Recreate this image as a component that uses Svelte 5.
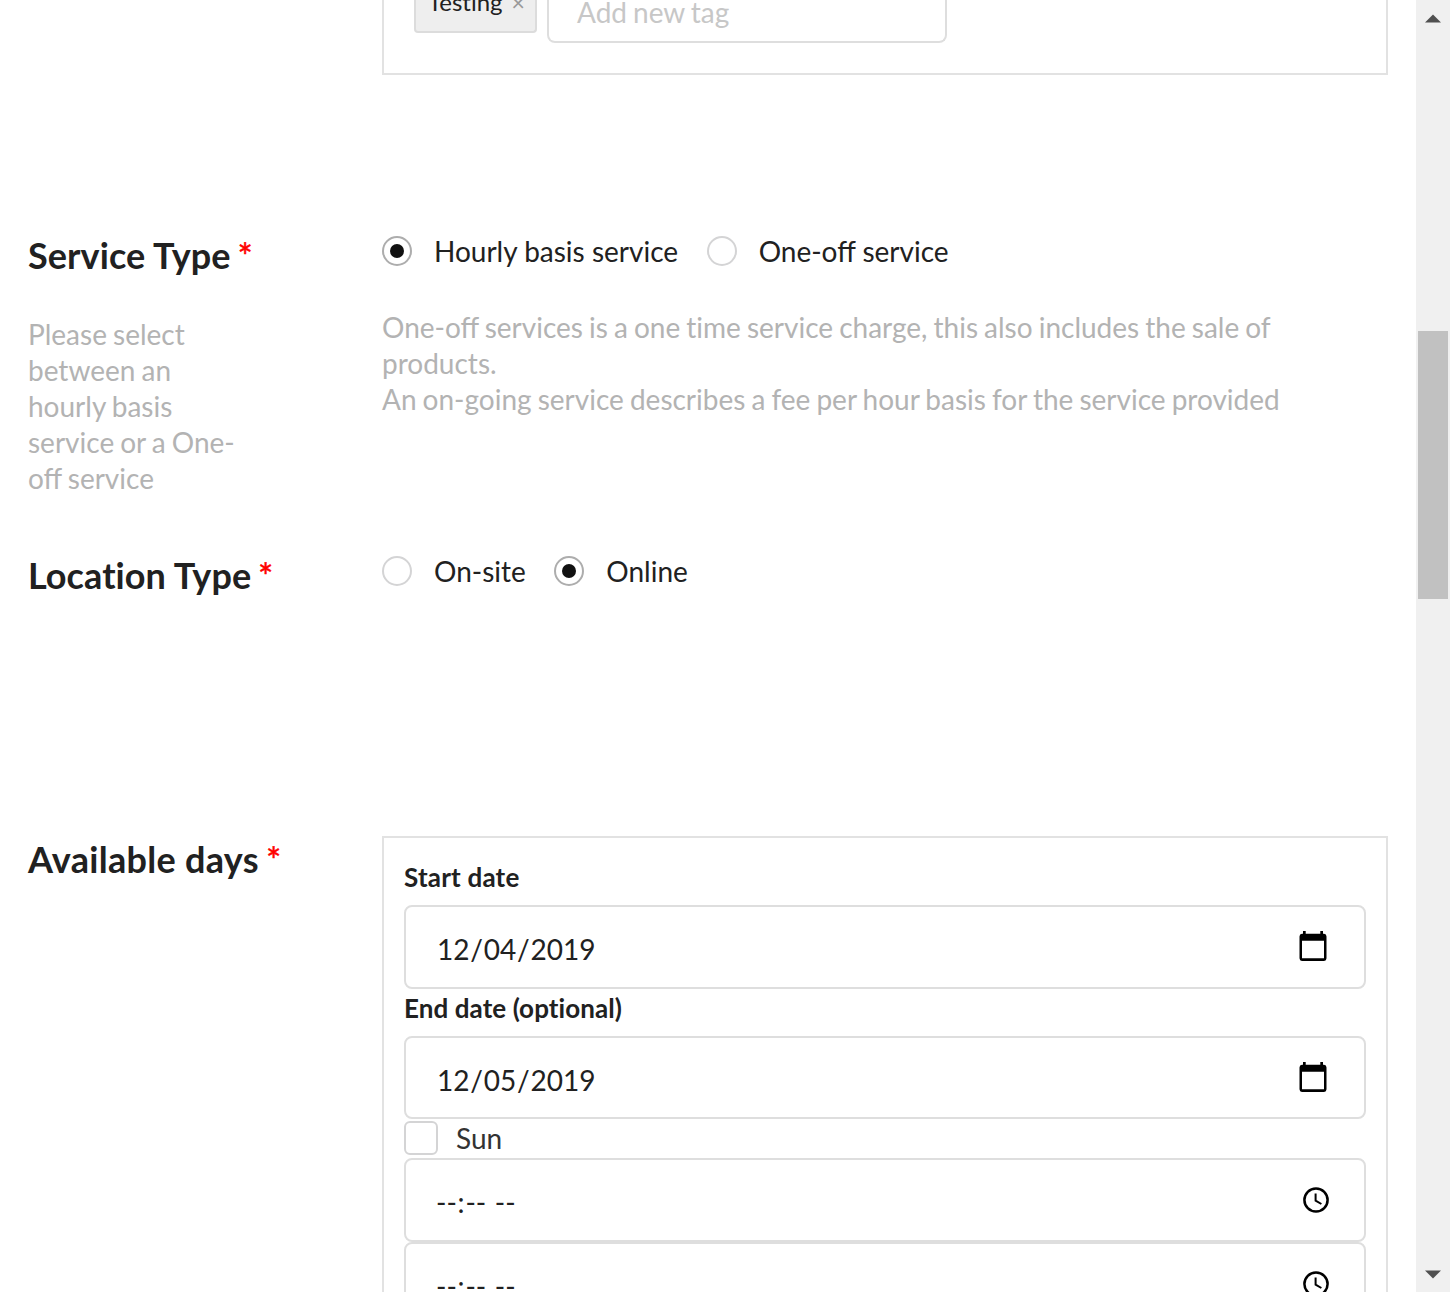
<script>
  const dates = [
    { label: 'Start date', parts: ['12', '04', '2019'] },
    { label: 'End date (optional)', parts: ['12', '05', '2019'] }
  ];
  const times = ['from', 'to'];
</script>

{#snippet radio(label, checked)}
  <label class="radio">
    <span class="ring" class:checked></span>
    <span>{label}</span>
  </label>
{/snippet}

<div class="page">
  <main>
    <section class="row tags-row">
      <div></div>
      <div class="box tags">
        <div class="tag"><span>Testing</span><span class="close">×</span></div>
        <div class="tag-input">Add new tag</div>
      </div>
    </section>

    <section class="row service-row">
      <div class="side">
        <h2>Service Type <span class="star">*</span></h2>
        <p class="hint">Please select between an hourly basis service or a One-off service</p>
      </div>
      <div>
        <div class="radios">
          {@render radio('Hourly basis service', true)}
          {@render radio('One-off service', false)}
        </div>
        <p class="note">
          One-off services is a one <span class="plain">time</span> service charge, this also includes the sale of products.<br />
          An on-going service describes a fee per hour basis for the service provided
        </p>
      </div>
    </section>

    <section class="row location-row">
      <div class="side"><h2>Location Type <span class="star">*</span></h2></div>
      <div class="radios">
        {@render radio('On-site', false)}
        {@render radio('Online', true)}
      </div>
    </section>

    <section class="row days-row">
      <div class="side"><h2>Available days <span class="star">*</span></h2></div>
      <div class="box days">
        {#each dates as d, i}
          <div class="label" class:wide={i === 0}>{d.label}</div>
          <div class="field" class:short={i === 1}>
            <span class="value">{d.parts[0]}<i>/</i>{d.parts[1]}<i>/</i>{d.parts[2]}</span>
            <svg class="calendar" width="28" height="31" viewBox="0 0 28 31">
              <path fill-rule="evenodd" d="M4 0H6.7V2.8H21.3V0H24V2.8H25A2.6 2.6 0 0 1 27.5 5.4V27.3A2.6 2.6 0 0 1 25 29.9H3A2.6 2.6 0 0 1 .5 27.3V5.4A2.6 2.6 0 0 1 3 2.8H4ZM3 9.8V27.3H25V9.8Z" />
            </svg>
          </div>
        {/each}
        <div class="check"><span class="tick"></span><span>Sun</span></div>
        {#each times as t (t)}
          <div class="field">
            <span class="time"><b>--</b><b class="colon">:</b><b>--</b><b class="meridiem">--</b></span>
            <svg class="clock" width="26" height="26" viewBox="0 0 26 26">
              <circle cx="13" cy="13" r="11.6" />
              <path d="M12.6 6.5V13.6L18.4 17" />
            </svg>
          </div>
        {/each}
      </div>
    </section>
  </main>

  <aside class="scrollbar">
    <svg width="18" height="9" viewBox="0 0 18 9"><path d="M1 8.5L9 .5L17 8.5Z" /></svg>
    <div class="thumb"></div>
    <svg class="down" width="18" height="9" viewBox="0 0 18 9"><path d="M1 .5H17L9 8.5Z" /></svg>
  </aside>
</div>

<style>
  .page {
    display: flex;
    height: 1292px;
    overflow: hidden;
    background: #fff;
    color: #212121;
    font: 28px/36px Lato, 'Liberation Sans', sans-serif;
    font-variant-ligatures: none;
  }
  .page * { box-sizing: border-box; }
  main { flex: 1; overflow: hidden; }
  .row {
    display: grid;
    grid-template-columns: 354px 1006px;
    padding-left: 28px;
  }
  .tags-row { height: 236px; }
  .service-row { height: 320px; }
  .location-row { height: 280px; }

  h2 { margin: -1px 0 0; font-size: 36px; line-height: 40px; font-weight: 700; letter-spacing: .08px; }
  .star {
    position: relative;
    top: 1px;
    color: #f00;
    font-size: 36px;
    line-height: 0;
    font-weight: 400;
    margin-left: -2px;
    -webkit-text-stroke: .5px #f00;
  }
  .hint, .note { color: #b3b3b3; word-spacing: -1.1px; font-variant-ligatures: normal; }
  .hint { margin: 41px 0 0; width: 214px; }
  .note { margin: 43px 0 0; width: 920px; }
  .plain { font-variant-ligatures: none; }

  .box { border: 2px solid #e2e2e2; }
  .tags {
    display: flex;
    gap: 10px;
    align-items: flex-start;
    height: 75px;
    border-top: 0;
    padding-left: 30px;
  }
  .tag {
    display: flex;
    gap: 9px;
    width: 123px;
    height: 33px;
    padding-left: 12px;
    border: 2px solid #dcdcdc;
    border-top: 0;
    border-radius: 0 0 4px 4px;
    background: #eee;
    font-size: 24px;
    line-height: 4px;
  }
  .close { color: #999; font-size: 23px; }
  .tag-input {
    width: 400px;
    height: 43px;
    padding-left: 28px;
    border: 2px solid #dedede;
    border-top: 0;
    border-radius: 0 0 8px 8px;
    color: #c7c7c7;
    line-height: 24px;
    word-spacing: -1.1px;
  }

  .radios { display: flex; gap: 28.6px; height: 30px; }
  .radio {
    display: flex;
    gap: 22px;
    line-height: 30px;
    white-space: nowrap;
    font-variant-ligatures: normal;
  }
  .ring {
    display: grid;
    place-items: center;
    width: 30px;
    height: 30px;
    border: 2px solid #d4d4d5;
    border-radius: 50%;
  }
  .ring.checked { border-color: #adadad; }
  .ring.checked::after {
    content: '';
    width: 14px;
    height: 14px;
    border-radius: 50%;
    background: #111;
  }

  .days-row h2 { padding-top: 4px; letter-spacing: .3px; }
  .days { height: 520px; padding: 19px 20px 0; }
  .label {
    height: 48px;
    padding-top: 2px;
    font-size: 26px;
    line-height: 37px;
    font-weight: 700;
    letter-spacing: .08px;
  }
  .label.wide { letter-spacing: .2px; }
  .field {
    display: flex;
    justify-content: space-between;
    align-items: flex-start;
    height: 84px;
    border: 2px solid #dedede;
    border-radius: 8px;
    padding: 0 34px 0 30px;
  }
  .field.short { height: 83px; }
  .label + .field { margin-bottom: -1px; }
  .label + .field.short { margin-bottom: 0; }
  .value { padding: 24px 0 0 1px; white-space: nowrap; }
  .value i { font-style: normal; margin: 0 .8px; }
  .calendar { margin: 24px 3px 0 0; }
  .clock { margin: 27px 1px 0 0; fill: none; stroke: #000; stroke-width: 2.5; }
  .clock path { stroke-width: 2; }
  .time { display: flex; padding-top: 24px; }
  .time b { font-weight: 400; }
  .time .colon { margin: 0 .8px; }
  .time .meridiem { margin-left: 8.6px; }
  .check { display: flex; gap: 18px; height: 39px; padding-top: 2px; line-height: 34px; color: #333; }
  .tick { width: 34px; height: 34px; border: 2px solid #d4d4d5; border-radius: 6px; }

  .scrollbar {
    display: flex;
    flex-direction: column;
    align-items: center;
    width: 34px;
    padding: 14px 0 13px;
    background: #f0f0f0;
    fill: #505050;
  }
  .thumb { width: 30px; height: 268px; margin-top: 308px; background: #c1c1c1; }
  .down { margin-top: auto; }
</style>
